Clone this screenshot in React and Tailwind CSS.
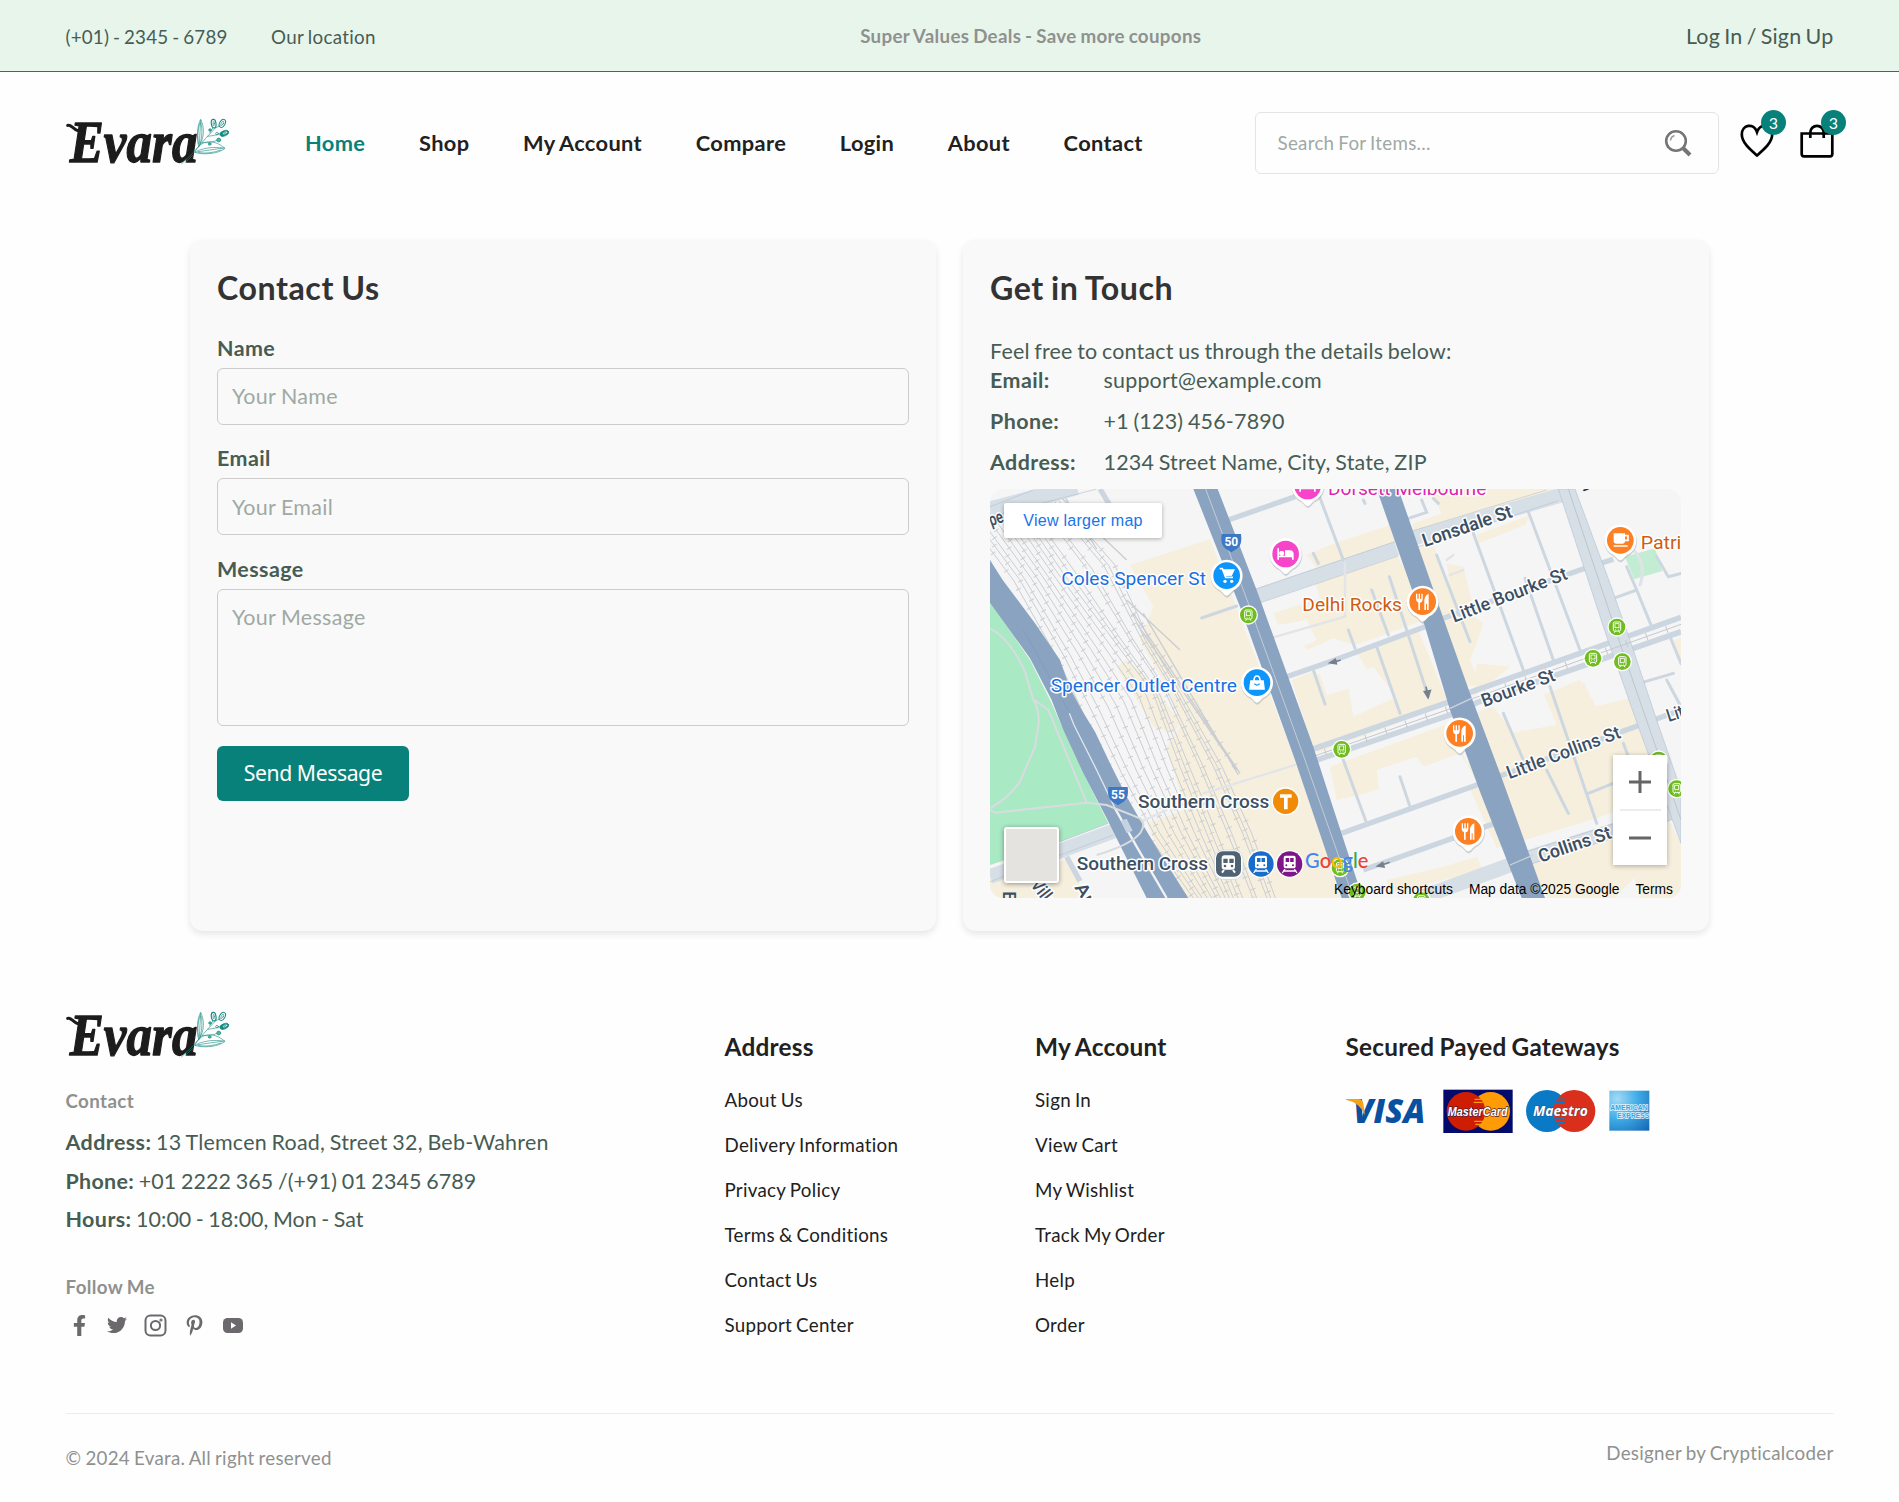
import React from "react";
import { FaFacebookF, FaTwitter, FaPinterestP } from "react-icons/fa";

const NAV = ["Home", "Shop", "My Account", "Compare", "Login", "About", "Contact"];
const ADDRESS_LINKS = ["About Us", "Delivery Information", "Privacy Policy", "Terms & Conditions", "Contact Us", "Support Center"];
const ACCOUNT_LINKS = ["Sign In", "View Cart", "My Wishlist", "Track My Order", "Help", "Order"];

function Logo() {
  return (
    <svg width="166" height="50" viewBox="15 15 498 150" overflow="visible" className="block shrink-0 overflow-visible">
      <text x="26" y="152" fontFamily="'Liberation Serif', serif" fontStyle="italic" fontWeight="700" fontSize="180" fill="#1c1c1c" stroke="#1c1c1c" strokeWidth="4" strokeLinejoin="round" textLength="384" lengthAdjust="spacingAndGlyphs">Evara</text>
      <path d="M20 43c10-4 14 10 30 16" fill="none" stroke="#1c1c1c" strokeWidth="9" strokeLinecap="round" />
      <g fill="none" stroke="#148a80" strokeWidth="1.800" strokeLinecap="round">
        <path fill="#fff" d="M402 124c14-34 50-45 90-12 1 0-16 14-50 16-15 1-27 0-40-4Z" />
        <path fill="#fff" d="M413 107c-6-30-5-62 6-82 11 24 13 54-6 82Z" />
        <path d="M404 123c30-4 55-8 86-12M410 119c25-9 48-12 76-8M412 125c25 3 46 0 68-8M415 104c1-30 3-54 4-76M418 98c6-26 6-45 2-62M412 98c-3-20-1-48 5-62" />
        <path d="M362 158l30-28 42-48 30-32M374 154l20-20M446 66l10-16M440 76c16-2 26-4 38-8M424 94c12 2 24 2 44-6M464 50l14-6" />
        <ellipse cx="458" cy="38" rx="7" ry="13" strokeWidth="3.500" transform="rotate(-8 458 38)" />
        <ellipse cx="458" cy="38" rx="2" ry="7" />
        <ellipse cx="484" cy="37" rx="8" ry="13" strokeWidth="3" transform="rotate(30 484 37)" />
        <ellipse cx="484" cy="37" rx="3" ry="7" transform="rotate(30 484 37)" />
        <ellipse cx="490" cy="67" rx="14" ry="8" fill="#148a80" transform="rotate(-22 490 67)" />
        <ellipse cx="492" cy="66" rx="6" ry="2.500" stroke="#fff" transform="rotate(-22 492 66)" />
        <circle cx="447" cy="57" r="4" fill="#57b0a8" />
        <circle cx="473" cy="87" r="6" fill="#57b0a8" />
        <circle cx="468" cy="68" r="4" />
        <circle cx="446" cy="99" r="4" fill="#57b0a8" />
      </g>
    </svg>
  );
}

const RAIL_LEFT = [[-80, 60], [100, 300], [235, 540], [310, 700], [400, 880], [500, 1060], [640, 1254]];
const RAIL_MID = [[100, 60], [250, 280], [400, 480], [520, 640], [600, 860], [680, 1060], [760, 1254]];
const RAIL_RIGHT = [[250, 60], [420, 250], [520, 480], [610, 640], [740, 860], [830, 1060], [900, 1254]];

function railPoints(a, b, t) {
  return a.map((p, i) => [p[0] + (b[i][0] - p[0]) * t, p[1] + (b[i][1] - p[1]) * t]);
}
const RAILS = [
  ...[0, 0.12, 0.22, 0.35, 0.46, 0.58, 0.68, 0.8, 0.9, 1].map((t) => railPoints(RAIL_LEFT, RAIL_MID, t)),
  ...[0.1, 0.2, 0.42, 0.5, 0.72, 0.8, 0.9].map((t) => railPoints(RAIL_MID, RAIL_RIGHT, t)),
];
const d = (pts) => "M" + pts.map((p) => p[0] + " " + p[1]).join("L");

function Pin({ x, y, color, children }) {
  return (
    <g transform={`translate(${x} ${y})`}>
      <path d="M0 62C-6 62-12 52-20 45A49 49 0 1 1 20 45C12 52 6 62 0 62Z" fill="#9aa3ad" opacity=".45" transform="translate(1 4)" />
      <path d="M0 60C-6 60-12 50-20 44A48 48 0 1 1 20 44C12 50 6 60 0 60Z" fill="#fff" />
      <circle r="40" fill={color} />
      {children}
    </g>
  );
}
const Food = () => (
  <path d="M-20-24v16q0 9 7 11v22h5V3q8-2 8-11v-16h-4v15h-4v-15h-4v15h-4v-15ZM5 25V5q-2-24 13-29v49h-5V6h-3v19Z" fill="#fff" />
);
const Bed = () => (
  <path d="M-25-17h5v22h18v-16h14q12 0 12 12v16h-5v-7h-39v7h-5ZM-12-9a7 7 0 1 1 0 13.900a7 7 0 1 1 0-13.900Z" fill="#fff" />
);
function Tram({ x, y }) {
  return (
    <g transform={`translate(${x} ${y})`}>
      <circle r="29" fill="#fff" />
      <circle r="25" fill="#70bd1e" />
      <rect x="-11" y="-15" width="22" height="27" rx="4" fill="none" stroke="#fff" strokeWidth="3" />
      <rect x="-6" y="-10" width="12" height="12" fill="none" stroke="#fff" strokeWidth="2.500" />
      <path d="M-8 17L-5 12M8 17L5 12M-5 7h2M3 7h2" stroke="#fff" strokeWidth="3" />
    </g>
  );
}
function Label({ x, y, w, color, size = 57, weight = 400, rotate = 0, children }) {
  return (
    <text x={x} y={y} transform={`rotate(${rotate} ${x} ${y})`} textLength={w} lengthAdjust="spacingAndGlyphs" fontFamily="Roboto, sans-serif" fontSize={size} fontWeight={weight} fill={color} stroke="#fff" strokeWidth="9" strokeLinejoin="round" paintOrder="stroke">
      {children}
    </text>
  );
}
function Shield({ x, y, children }) {
  return (
    <g transform={`translate(${x} ${y})`}>
      <path d="M-29-24h58q5 34-12 44L0 31-17 20q-17-10-12-44Z" fill="#3c78c4" />
      <text y="12" textAnchor="middle" fontFamily="Roboto, sans-serif" fontWeight="700" fontSize="36" fill="#fff">{children}</text>
    </g>
  );
}
function Train({ x, color }) {
  return (
    <g transform={`translate(${x} 1152)`}>
      <circle r="42" fill="#fff" />
      <circle r="38" fill={color} />
      <rect x="-18" y="-25" width="36" height="38" rx="6" fill="#fff" />
      <path d="M-12-18h24v12h-24Z" fill={color} />
      <path d="M0-18v12" stroke="#fff" strokeWidth="3" />
      <circle cx="-10" cy="4" r="3" fill={color} />
      <circle cx="10" cy="4" r="3" fill={color} />
      <path d="M-14 15l-8 12M14 15l8 12M-20 21h40" stroke="#fff" strokeWidth="4" />
    </g>
  );
}

function CityMap() {
  return (
    <svg viewBox="30 27 2073 1227" preserveAspectRatio="none" className="block h-full w-full">
      <rect x="30" y="27" width="2073" height="1227" fill="#f5f5f6" />
      <g fill="#f6efdd">
        <path d="M450 255L690 178 945 840 1110 1254H760L690 1130 610 970 560 800 600 740 570 640 480 480 520 380Z" />
        <path d="M410 560l30-20 70 60 90 130-20 30-60-20Z" />
        <path d="M980 225l70-30 180-60 20 60-230 80ZM1000 290l240-80 120 200-330 120-60-30 40-20-30-60-85 15-15-35 140-45Z" />
        <path d="M935 600l380-150 90 220-390 150-20-30Z" />
        <path d="M1350 27h380L1290 175 1300 130 1385 100Z" />
        <path d="M1290 205l70-15 60 180 90 60-20 60-20 50 30 70-40 10-80-200-50-110Z" />
        <path d="M1490 165l160-60-15 30-140 55ZM1400 250l50 10 30 120-60 20Z" />
        <path d="M1050 860l360-130 80 190-150-60-60-20-90 40 20 40-50 20-90 20Z" />
        <path d="M1480 700l60-20 60 80 130-25 20-70 60-60 40 80 120-35 60 130-70 20-20 180-90 35-300 90-90-200Z" />
        <path d="M1490 550l100 10-110 90ZM1600 680l200-80 40 80 130-30 90 160-250 80-90-60-120-90Z" />
        <path d="M1640 1130l410-140 53 100v164h-120l-20-60-60 60h-200Z" />
        <path d="M1390 1160l100-30 20 40-280 70-10-40ZM500 1030l170-60 110 284H600Z" />
        <path d="M30 1200l230-60 60 114H30ZM2080 480l23-5v90ZM1400 440l60 10-20 80-30-10Z" />
      </g>
      <g fill="#f5f5f6">
        <path d="M970 515l90-40 60 20 60 110-140 40-20-60-30-10ZM1100 590l80-30 70 90-130 60Z" />
        <path d="M1190 870l120-40 20 30 110-40 60 100-350 110-20-50 70-20Z" />
        <path d="M1560 655l120-40 50 120-120 20Z" />
      </g>
      <path d="M30 365L150 540 215 670 250 750 320 900 385 1030 240 1085 30 1155Z" fill="#a9e9c3" />
      <path d="M1935 230l90-25 22 68-85 25Z" fill="#c3edd2" />
      <g stroke="#cacdd2" fill="none">
        {RAILS.map((pts, i) => <path key={i} d={d(pts)} strokeWidth="3" />)}
        {RAILS.map((pts, i) => <path key={"t" + i} d={d(pts)} strokeWidth="16" strokeDasharray="3 63" strokeDashoffset={i * 29} />)}
        <path d="M460 400L780 880M490 400L775 885M470 430L770 870M440 360L600 510M230 40L440 240M180 27L250 150M240 27l110 180" strokeWidth="4" />
        <path d="M460 400L780 880" strokeWidth="20" strokeDasharray="3 36" />
      </g>
      <g fill="none" stroke="#d6dee6" strokeWidth="44">
        <path d="M30 1190L410 1050M825 350L1250 205M1290 178L1745 45M1590 1150L2103 988M1330 1250L1590 1155" />
        <path d="M30 90L290 20" strokeWidth="50" />
      </g>
      <g fill="none" stroke="#b8c6d3" strokeWidth="2">
        <path d="M30 1205L400 1065M240 1085L385 1030M30 80L160 30M30 110L350 27M825 328L1245 185M830 372L1255 228M1300 205L1735 62M1290 155L1700 30M1590 1172L2103 1010M1600 1128L2103 966" />
      </g>
      <g fill="none" stroke="#cbd6e0" strokeWidth="16">
        <path d="M745 120L945 50M920 590L1050 545 1335 440M1390 415L1800 270 1900 238M1085 1060L1505 910M1560 888L1980 735 2103 690M1150 1170L1545 1030" />
        <path d="M1000 807L1410 665 1470 637 2103 412M1005 842L1430 698 1490 668 2103 455" strokeWidth="17" />
        <path d="M260 1130L300 1204M360 27l30 50" strokeWidth="16" />
      </g>
      <g fill="none" stroke="#cdd7e0" strokeWidth="9" strokeLinecap="round">
        <path d="M665 414L770 378M1000 220L1015 250M1000 570L1035 672M1010 27L1090 240M1228 290L1345 650M1175 330L1225 465M1105 450L1125 505M1190 500L1260 700M1645 95L1800 510M1480 160L1630 570M1635 295L1720 540M1370 225L1470 485M1570 700L1630 840M1710 620L1850 1030M1700 870L1765 1000M1825 940L1900 910M1930 790L1945 830M1260 890L1290 980M1090 840L1160 1030M1900 355L1970 330 2015 440M2030 230L2065 290 2103 280M1940 260L1970 330M1985 608L2080 580M2060 600L2103 680M2070 470L2103 550M1285 115L1340 97 1325 60M1150 60L1155 70M1360 55L1375 70" />
        <path d="M1965 215q35 40 15 100" stroke="#dfe3e7" />
        <path d="M670 940L945 855M490 1022L560 990M1095 245V410L880 472M1400 240l20-15M1410 285l40-15" stroke="#e2e4e7" strokeWidth="7" />
      </g>
      <path d="M1735 27L1785 27 1890 310 1960 510 2030 720 2103 930V1090L1975 740 1880 470Z" fill="#d6dee6" stroke="#b8c6d3" strokeWidth="2" />
      <path d="M1765 27L1920 490 2103 1020" fill="none" stroke="#bdc5cd" strokeWidth="3" />
      <path d="M975 838L1420 683 1480 655 2103 433" fill="none" stroke="#c4c9ce" strokeWidth="3" />
      <path d="M975 838L1420 683 1480 655 2103 433" fill="none" stroke="#c4c9ce" strokeWidth="22" strokeDasharray="3 61" />
      <path d="M30 240L68 300 165 430 240 540 268 620 305 690 345 755 390 850 440 950 492 1040 540 1120 625 1254H500L430 1115 380 1015 310 880 250 750 215 660 150 535 30 368Z" fill="#89a3c1" />
      <path d="M130 450L270 700" stroke="#7d99ba" strokeWidth="2" />
      <path d="M268 700L282 735 345 860 405 985" fill="none" stroke="#dfe5ec" strokeWidth="4" />
      <path d="M405 985L470 1100 560 1254" fill="none" stroke="#f0f2f5" strokeWidth="7" />
      <path d="M640 27L713 27 830 330 1000 800 1050 955 1148 1254H1085L945 840 780 380Z" fill="#89a3c1" />
      <path d="M677 27L805 370 975 840 1120 1254" fill="none" stroke="#c3ccd6" strokeWidth="3" />
      <path d="M1190 27L1255 27 1390 415 1470 640 1560 880 1695 1254H1625L1500 935 1410 690 1335 440Z" fill="#89a3c1" />
      <path d="M1410 685L1475 655M1590 1155L1660 1125" stroke="#cfd4d9" strokeWidth="4" />
      <g fill="none" stroke="#d9dcdf" strokeWidth="6">
        <path d="M30 445Q90 475 135 575L160 660Q180 690 175 740L165 800 120 905Q90 950 30 985M160 658L205 690 320 968M30 990L45 998 320 968 380 975 480 1015Q500 1030 480 1060 450 1095 350 1125" />
      </g>
      <path d="M422 1022l18-6 18 36-18 8Z" fill="#c5d3e1" />
      <g stroke="#76808c" strokeWidth="5" fill="#76808c">
        <path d="M1060 547l22-7M1050 548l16-10 3 13ZM1338 620l4 20M1344 653l-11-18 18-3ZM1205 1155l24-8M1193 1158l15-10 4 13Z" />
      </g>

      <Label x="34" y="139" w="42" size="54" weight="600" color="#3d4f63" rotate={-20}>pe</Label>
      <text x="68" y="1234" transform="rotate(90 68 1234)" fontFamily="Roboto, sans-serif" fontSize="54" fontWeight="500" fill="#3d4f63">E</text>
      <Label x="150" y="1215" w="90" size="54" weight="500" color="#3d4f63" rotate={52}>Villa</Label>
      <Label x="282" y="1222" w="100" size="54" weight="500" color="#3d4f63" rotate={58}>Aur</Label>
      <Label x="1334" y="202" w="282" size="56" weight="600" color="#3d4f63" rotate={-19}>Lonsdale St</Label>
      <Label x="1422" y="428" w="368" size="55" weight="500" color="#3d4f63" rotate={-21}>Little Bourke St</Label>
      <Label x="1512" y="682" w="232" size="55" weight="500" color="#3d4f63" rotate={-20.5}>Bourke St</Label>
      <Label x="1588" y="898" w="360" size="55" weight="500" color="#3d4f63" rotate={-20.5}>Little Collins St</Label>
      <Label x="1682" y="1148" w="228" size="55" weight="600" color="#3d4f63" rotate={-19}>Collins St</Label>
      <Label x="2066" y="726" w="66" size="54" weight="500" color="#3d4f63" rotate={-18}>Litt</Label>
      <path d="M1808 30l14-6 6 4-16 6Z" fill="#26374c" />

      <Shield x="754" y="186">50</Shield>
      <Shield x="414" y="945">55</Shield>
      <Pin x={983} y={18} color="#f745c9"><Bed /></Pin>
      <Pin x={917} y={222} color="#f745c9"><Bed /></Pin>
      <Pin x={740} y={287} color="#0c95fb">
        <path d="M-21-21h8l10 26h22M-12-17h33L14-2H-4" fill="none" stroke="#fff" strokeWidth="5" />
        <path d="M-12-17h33L14 0H-5Z" fill="#fff" />
        <circle cx="-5" cy="17" r="5" fill="#fff" /><circle cx="15" cy="17" r="5" fill="#fff" />
      </Pin>
      <Pin x={831} y={608} color="#0c95fb">
        <path d="M-18-5h36l3 24h-42ZM-9-5q0-15 9-15t9 15" fill="none" stroke="#fff" strokeWidth="5" />
        <path d="M-18-5h36l3 24h-42Z" fill="#fff" /><path d="M-8 3q8 9 16 0" fill="none" stroke="#0c95fb" strokeWidth="4" />
      </Pin>
      <Pin x={1328} y={365} color="#fd8024"><Food /></Pin>
      <Pin x={1439} y={760} color="#fd8024"><Food /></Pin>
      <Pin x={1465} y={1054} color="#fd8024"><Food /></Pin>
      <Pin x={1921} y={181} color="#fd8024">
        <path d="M-20-21h34v24q0 7-7 7h-20q-7 0-7-7Z" fill="#fff" /><path d="M14-14h9v14h-9M-20 17h42" fill="none" stroke="#fff" strokeWidth="5" />
      </Pin>
      <Tram x={805} y={405} /><Tram x={1085} y={808} /><Tram x={1911} y={441} /><Tram x={1839} y={535} />
      <Tram x={1927} y={545} /><Tram x={2036} y={840} /><Tram x={2090} y={926} /><Tram x={1080} y={1163} />
      <Tram x={1132} y={1236} /><Tram x={1324} y={1262} />
      <circle cx="917" cy="964" r="42" fill="#fff" /><circle cx="917" cy="964" r="38" fill="#f18a05" />
      <path d="M900 943h35v10h-12v35h-11v-35h-12Z" fill="#fff" />
      <g>
        <rect x="703" y="1110" width="86" height="88" rx="26" fill="#fff" stroke="#ccd1d6" strokeWidth="2" />
        <rect x="708" y="1114" width="75" height="76" rx="20" fill="#4f6274" />
        <rect x="725" y="1126" width="40" height="43" rx="9" fill="#fff" />
        <path d="M730 1136h13v13h-13ZM748 1136h13v13h-13Z" fill="#4f6274" />
        <circle cx="735" cy="1158" r="4" fill="#4f6274" /><circle cx="756" cy="1158" r="4" fill="#4f6274" />
        <path d="M732 1170l-6 8M759 1170l6 8" stroke="#fff" strokeWidth="6" />
      </g>
      <Train x={843} color="#1a6ccc" /><Train x={929} color="#7d1787" />

      <Label x="244" y="315" w="434" color="#1a6fe0">Coles Spencer St</Label>
      <Label x="212" y="635" w="559" color="#1a6fe0">Spencer Outlet Centre</Label>
      <Label x="967" y="393" w="299" color="#cf5c12">Delhi Rocks</Label>
      <Label x="1982" y="208" w="122" color="#cf5c12">Patri</Label>
      <Label x="1044" y="46" w="475" color="#e024b0">Dorsett Melbourne</Label>
      <Label x="474" y="983" w="394" weight="500" color="#3d4f63">Southern Cross</Label>
      <Label x="290" y="1171" w="394" weight="500" color="#3d4f63">Southern Cross</Label>
      <text x="975" y="1164" fontFamily="Lato, sans-serif" fontSize="62" textLength="190" fontWeight="500" lengthAdjust="spacingAndGlyphs">
        <tspan fill="#4285f4">G</tspan><tspan fill="#ea4335">o</tspan><tspan fill="#fbbc05">o</tspan><tspan fill="#4285f4">g</tspan><tspan fill="#34a853">l</tspan><tspan fill="#ea4335">e</tspan>
      </text>
    </svg>
  );
}

function Field({ label, placeholder, area }) {
  return (
    <div className={area ? "mb-[20px]" : "mb-[20.700px]"}>
      <label className="block h-[33px] text-[21.440px] font-bold leading-[26px] tracking-[0.02em]">{label}</label>
      {area ? (
        <textarea placeholder={placeholder} className="block h-[137px] w-full resize-none rounded-[6px] border border-[#cccccc] bg-transparent px-[14px] py-[11px] text-[21.440px] leading-[32px] tracking-[0.015em] [word-spacing:-0.03em] placeholder:text-[#9fa9a4]" />
      ) : (
        <input placeholder={placeholder} className="block h-[56.700px] w-full rounded-[6px] border border-[#cccccc] bg-transparent px-[14px] text-[21.440px] tracking-[0.015em] [word-spacing:-0.03em] placeholder:text-[#9fa9a4]" />
      )}
    </div>
  );
}

function Detail({ label, children }) {
  return (
    <div className="flex h-[41px] items-start leading-[26px]">
      <strong className="w-[113.500px] font-bold tracking-[0.02em]">{label}</strong>
      <span className="tracking-[0.010em]">{children}</span>
    </div>
  );
}

function Badge() {
  return <span className="absolute -top-[14px] left-[21.500px] flex size-[25px] items-center justify-center rounded-full bg-[#08817a] text-[16px] leading-none text-white">3</span>;
}

function FooterColumn({ title, links }) {
  return (
    <div className="w-[310.500px]">
      <h3 className="mb-[25px] h-[32px] text-[24.400px] font-bold leading-[32px] tracking-[0.01em] text-[#212121]">{title}</h3>
      <ul className="flex flex-col">
        {links.map((l) => <li key={l} className="h-[45px] text-[18.760px] leading-[23px] text-[#212121]">{l}</li>)}
      </ul>
    </div>
  );
}

function Payments() {
  return (
    <svg width="306" height="46" viewBox="138 240 918 138" className="block">
      <defs>
        <radialGradient id="amex" cx=".2" cy=".2" r="1.1"><stop offset="0" stopColor="#a3daf6" /><stop offset=".45" stopColor="#42aee8" /><stop offset="1" stopColor="#1667b5" /></radialGradient>
      </defs>
      <text x="160" y="343" fontFamily="'Open Sans', sans-serif" fontStyle="italic" fontWeight="800" fontSize="98" fill="#0a50a0" textLength="216" lengthAdjust="spacingAndGlyphs">VISA</text>
      <path d="M138 270h38q12 0 14 14l5 35q-14-38-57-47Z" fill="#f5a21b" />
      <rect x="430" y="242" width="208" height="130" fill="#020b6b" />
      <circle cx="572" cy="307" r="58" fill="#ff9b04" />
      <circle cx="498" cy="307" r="58" fill="#cf1d02" />
      <path d="M524 271h24M521 280h27M523 337h26M526 346h20" stroke="#ff9b04" strokeWidth="4" />
      <text x="443" y="320" fontFamily="'Liberation Sans', sans-serif" fontStyle="italic" fontWeight="700" fontSize="39" fill="#fff" stroke="#452040" strokeWidth="4" paintOrder="stroke" textLength="180" lengthAdjust="spacingAndGlyphs">MasterCard</text>
      <circle cx="741" cy="306" r="63" fill="#0a7ac6" />
      <circle cx="823" cy="306" r="63" fill="#da2f1d" />
      <path d="M772 271h22M766 281h28M766 330h28M770 340h24" stroke="#0a7ac6" strokeWidth="5" />
      <text x="699" y="320" fontFamily="'Open Sans', sans-serif" fontStyle="italic" fontWeight="700" fontSize="42" fill="#fff" stroke="#345" strokeWidth="2" paintOrder="stroke" textLength="165" lengthAdjust="spacingAndGlyphs">Maestro</text>
      <rect x="928" y="245" width="120" height="120" fill="url(#amex)" />
      <g fontFamily="'Liberation Sans', sans-serif" fontWeight="700" fontSize="20" fill="#3aa0dd" stroke="#e4f4fc" strokeWidth="4" paintOrder="stroke">
        <text x="931" y="303" textLength="112" lengthAdjust="spacingAndGlyphs">AMERICAN</text>
        <text x="952" y="328" textLength="96" lengthAdjust="spacingAndGlyphs">EXPRESS</text>
      </g>
    </svg>
  );
}

export default function App() {
  return (
    <div className="h-[1502px] overflow-hidden bg-[#fefefe] font-['Lato',sans-serif] text-[21.440px] tracking-[0.013em] text-[#475c53] [font-variant-ligatures:none] [word-spacing:-0.05em]">
      <div className="h-[72px] border-b border-[#08817a] bg-[#e8f5eb]">
        <div className="mx-auto flex h-full w-[1768px] items-center justify-between">
          <div className="flex gap-[43.500px] pt-[3px] text-[18.760px]">
            <span className="tracking-[0.010em]">(+01) - 2345 - 6789</span>
            <span className="tracking-[0.016em]">Our location</span>
          </div>
          <p className="pt-[1px] text-[18.760px] font-bold tracking-[0.017em] text-[#8f918f]">Super Values Deals - Save more coupons</p>
          <a className="pt-[1px] tracking-[0.010em] [word-spacing:-0.07em]">Log In / Sign Up</a>
        </div>
      </div>

      <header className="mx-auto flex h-[142px] w-[1768px] items-center">
        <div className="w-[239.500px] pb-[5px]"><Logo /></div>
        <nav className="flex gap-[53.600px] text-[21.800px] font-bold tracking-[0.017em] text-[#212121]">
          {NAV.map((n) => <a key={n} className={n === "Home" ? "text-[#08817a]" : ""}>{n}</a>)}
        </nav>
        <div className="ml-auto flex h-[62px] w-[464px] items-center justify-between rounded-[6px] border border-[#e3e5e4] pl-[22px] pr-[26px] text-[18.760px]">
          <span className="text-[#9fa9a4]">Search For Items...</span>
          <svg width="28" height="28" viewBox="0 0 28 28" fill="none" stroke="#757575">
            <circle cx="12" cy="12" r="9.800" strokeWidth="2.600" />
            <path d="M6.500 11.500a6 6 0 0 1 4-5" strokeWidth="1.600" stroke="#999" />
            <path d="M19 19l7 7" strokeWidth="4" />
          </svg>
        </div>
        <div className="relative mb-[4px] ml-[21px] h-[34px] w-[34px]">
          <svg width="34" height="34" viewBox="0 0 34 34" fill="none" stroke="#000" strokeWidth="2.700"><path d="M17 31.500C10 25.500 1.800 18.500 1.800 10.500c0-10 12-12 15.200-2.500C20.200-1.500 32.200.500 32.200 10.500c0 8-8.200 15-15.200 21Z" /></svg>
          <Badge />
        </div>
        <div className="relative mb-[4px] ml-[26px] h-[34px] w-[34px]">
          <svg width="34" height="34" viewBox="0 0 34 34" fill="none" stroke="#000" strokeWidth="2.700"><path d="M1.700 9.500h30.600v20.500q0 2.300-2.300 2.300H4q-2.300 0-2.300-2.300ZM10.300 14V8.500a6.700 6.700 0 0 1 13.400 0V14" /></svg>
          <Badge />
        </div>
      </header>

      <main className="mx-auto mt-[26px] grid h-[691px] w-[1519px] grid-cols-2 gap-[27px]">
        <section className="rounded-[13px] bg-[#f9f9f9] px-[27px] pt-[27px] shadow-[0_3px_7px_rgba(0,0,0,0.1)]">
          <h2 className="mb-[27px] h-[41px] text-[32.160px] font-bold leading-[41px] tracking-[0.017em] text-[#333333]">Contact Us</h2>
          <Field label="Name" placeholder="Your Name" />
          <Field label="Email" placeholder="Your Email" />
          <Field label="Message" placeholder="Your Message" area />
          <button className="h-[55px] w-[192px] rounded-[6px] bg-[#08817a] font-['Noto_Sans',sans-serif] text-[21.200px] tracking-[-0.02em] text-white">Send Message</button>
        </section>
        <section className="rounded-[13px] bg-[#f9f9f9] px-[27px] pt-[27px] shadow-[0_3px_7px_rgba(0,0,0,0.1)]">
          <h2 className="mb-[30px] h-[41px] text-[32.160px] font-bold leading-[41px] tracking-[0.017em] text-[#333333]">Get in Touch</h2>
          <p className="h-[29px] leading-[26px] tracking-[0.009em]">Feel free to contact us through the details below:</p>
          <Detail label="Email:">support@example.com</Detail>
          <Detail label="Phone:">+1 (123) 456-7890</Detail>
          <Detail label="Address:">1234 Street Name, City, State, ZIP</Detail>
          <div className="relative -mt-px h-[409px] w-[691px] overflow-hidden rounded-[13px] font-['Liberation_Sans',sans-serif] tracking-normal [word-spacing:0]">
            <CityMap />
            <div className="absolute left-[14px] top-[14px] flex h-[35px] w-[158px] items-center justify-center rounded-[2px] bg-white text-[16.080px] tracking-[0.015em] text-[#1a73e8] shadow-[0_1px_4px_rgba(0,0,0,0.3)]">View larger map</div>
            <div className="absolute bottom-[15px] left-[14px] h-[56px] w-[55px] rounded-[3px] border-2 border-white bg-[#e5e3df] shadow-[0_1px_5px_rgba(0,0,0,0.4)]" />
            <div className="absolute right-[14px] top-[266px] flex h-[110px] w-[54px] flex-col items-center bg-white shadow-[0_1px_5px_rgba(0,0,0,0.3)]">
              <svg width="54" height="110" viewBox="0 0 54 110" stroke="#666" strokeWidth="3"><path d="M16 27h22M27 16v22M16 83h22" /><path d="M7 55h41" stroke="#e6e6e6" strokeWidth="1.500" /></svg>
            </div>
            <div className="absolute bottom-0 right-[8px] flex h-[15px] items-center gap-[16px] whitespace-nowrap text-[13.800px] text-black">
              <span>Keyboard shortcuts</span><span>Map data ©2025 Google</span><span>Terms</span>
            </div>
          </div>
        </section>
      </main>

      <footer className="mx-auto mt-[78px] w-[1768px]">
        <div className="flex h-[404px]">
          <div className="w-[659px]">
            <Logo />
            <h4 className="mt-[30px] h-[23px] text-[18.760px] font-bold leading-[23px] tracking-[0.02em] text-[#8f918f]">Contact</h4>
            <div className="mt-[11px] leading-[38.500px]">
              <p className="tracking-[0.011em]"><b className="tracking-[0.02em]">Address:</b> 13 Tlemcen Road, Street 32, Beb-Wahren</p>
              <p className="tracking-[0.006em]"><b className="tracking-[0.015em]">Phone:</b> +01 2222 365 /(+91) 01 2345 6789</p>
              <p className="tracking-[0.002em]"><b className="tracking-[0.02em]">Hours:</b> 10:00 - 18:00, Mon - Sat</p>
            </div>
            <h4 className="mt-[36px] h-[23px] text-[18.760px] font-bold leading-[23px] tracking-[0.02em] text-[#8f918f]">Follow Me</h4>
            <div className="mt-[14px] flex items-center gap-[11.400px] text-[#6b696c]">
              <span className="flex size-[27px] items-center justify-center"><FaFacebookF size={21} /></span>
              <span className="flex size-[27px] items-center justify-center"><FaTwitter size={20} /></span>
              <span className="flex size-[27px] items-center justify-center">
                <svg width="23" height="23" viewBox="0 0 23 23" fill="none" stroke="currentColor" strokeWidth="2"><rect x="1.500" y="1.500" width="20" height="20" rx="5" /><circle cx="11.500" cy="11.500" r="4.600" /><circle cx="17" cy="6" r=".6" /></svg>
              </span>
              <span className="flex size-[27px] items-center justify-center"><FaPinterestP size={21} /></span>
              <span className="flex size-[27px] items-center justify-center">
                <svg width="20" height="15" viewBox="0 0 20 15"><rect width="20" height="15" rx="4.500" fill="currentColor" /><path d="M8 4.300l5 3.200-5 3.200Z" fill="#fff" /></svg>
              </span>
            </div>
          </div>
          <div className="flex pt-[22px]">
            <FooterColumn title="Address" links={ADDRESS_LINKS} />
            <FooterColumn title="My Account" links={ACCOUNT_LINKS} />
            <div>
              <h3 className="mb-[26px] h-[32px] whitespace-nowrap text-[24.300px] font-bold leading-[32px] tracking-[0.01em] text-[#212121]">Secured Payed Gateways</h3>
              <Payments />
            </div>
          </div>
        </div>
        <div className="flex h-[88px] items-center justify-between border-t border-[#ececec] text-[18.760px] text-[#8f918f]">
          <p className="pt-[2px]">© 2024 Evara. All right reserved</p>
          <p className="pb-[8px]">Designer by Crypticalcoder</p>
        </div>
      </footer>
    </div>
  );
}
